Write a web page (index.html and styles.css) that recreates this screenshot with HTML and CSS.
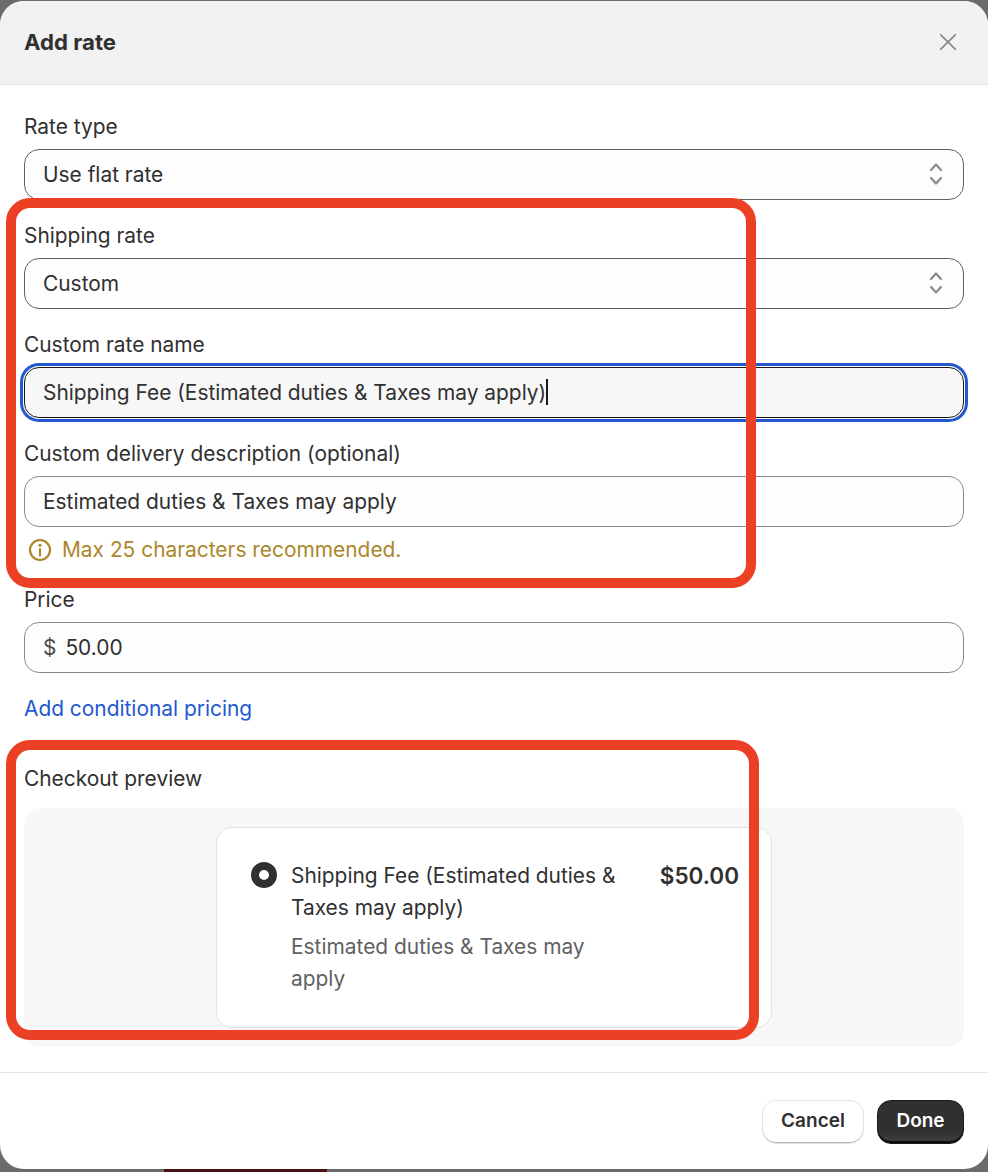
FILE: index.html
```html
<!DOCTYPE html>
<html lang="en">
<head>
<meta charset="utf-8">
<title>Add rate</title>
<link rel="stylesheet" href="styles.css">
</head>
<body>
<div class="modal">
  <header class="modal-head">
    <h1>Add rate</h1>
    <svg class="close" viewBox="0 0 20 20" aria-label="Close"><path d="M2 2 18 18M18 2 2 18"/></svg>
  </header>
  <main class="modal-body">
    <div class="field">
      <label>Rate type</label>
      <div class="control select"><span>Use flat rate</span>
        <svg class="updown" viewBox="0 0 14 26"><path d="M2 9 7 3.500 12 9M2 17 7 22.500 12 17"/></svg>
      </div>
    </div>
    <div class="field">
      <label>Shipping rate</label>
      <div class="control select"><span>Custom</span>
        <svg class="updown" viewBox="0 0 14 26"><path d="M2 9 7 3.500 12 9M2 17 7 22.500 12 17"/></svg>
      </div>
    </div>
    <div class="field">
      <label>Custom rate name</label>
      <div class="control focused"><span>Shipping Fee (Estimated duties &amp; Taxes may apply)</span><i class="caret"></i></div>
    </div>
    <div class="field">
      <label>Custom delivery description (optional)</label>
      <div class="control light"><span>Estimated duties &amp; Taxes may apply</span></div>
      <p class="warning">
        <svg viewBox="0 0 24 24"><circle cx="12" cy="12" r="10"/><path d="M12 11v6.500"/><circle class="dot" cx="12" cy="7.300" r="1.500"/></svg>
        Max 25 characters recommended.
      </p>
    </div>
    <div class="field">
      <label>Price</label>
      <div class="control light"><span class="prefix">$</span><span>50.00</span></div>
    </div>
    <a class="link" href="#">Add conditional pricing</a>
    <section class="preview-block">
      <label>Checkout preview</label>
      <div class="preview">
        <div class="card">
          <span class="radio"></span>
          <div class="rate-text">
            <div class="rate-name">Shipping Fee (Estimated duties &amp; Taxes may apply)</div>
            <div class="rate-desc">Estimated duties &amp; Taxes may apply</div>
          </div>
          <strong class="rate-price">$50.00</strong>
        </div>
      </div>
    </section>
  </main>
  <footer class="modal-foot">
    <button class="btn cancel">Cancel</button>
    <button class="btn done">Done</button>
  </footer>
  <div class="mark mark-a"></div>
  <div class="mark mark-b"></div>
</div>
<div class="peek"></div>
</body>
</html>
```

FILE: styles.css
```css
* { box-sizing: border-box; }
html, body { margin: 0; height: 1172px; overflow: hidden; }
body {
  background: #6b6b6b;
  font-family: Inter, "Liberation Sans", sans-serif;
  font-size: 20.900px;
  color: #303030;
  padding-top: 1px;
}
.modal {
  position: relative;
  height: 1168px;
  background: #fff;
  border-radius: 24px;
  overflow: hidden;
  display: flex;
  flex-direction: column;
}
.modal-head {
  height: 84px;
  flex: none;
  background: #f2f2f2;
  border-bottom: 1px solid #e3e3e3;
  display: flex;
  align-items: center;
  justify-content: space-between;
  padding: 0 31px 2px 24px;
}
.modal-head h1 { margin: 0; font-size: 22.200px; font-weight: 700; }
.close { width: 18px; height: 18px; fill: none; stroke: #8a8a8a; stroke-width: 2; stroke-linecap: round; }
.modal-body {
  flex: 1;
  padding: 29px 24px 0;
}
label { display: block; line-height: 26px; height: 26px; margin-bottom: 9px; }
.field { margin-bottom: 23.330px; }
.control {
  height: 50.670px;
  border: 1px solid #8a8a8a;
  border-radius: 15px;
  background: #fdfdfd;
  padding: 0 18px;
  display: flex;
  align-items: center;
  position: relative;
}
.select { border-color: #616161; justify-content: space-between; padding-right: 20px; }
.updown { width: 14px; height: 26px; fill: none; stroke: #8a8a8a; stroke-width: 2.200; stroke-linecap: round; stroke-linejoin: round; }
.focused {
  border-color: #1a1a1a;
  background: #f7f7f7;
  box-shadow: 0 0 0 1px #fff, 0 0 0 4px #2358cf;
}
.caret { display: block; width: 2px; height: 26px; background: #1a1a1a; margin-left: 0; }
.warning {
  margin: 10px 0 0;
  padding: 0 0 1.500px 4px;
  line-height: 26px;
  color: #ab872c;
  display: flex;
  align-items: center;
  gap: 10px;
}
.warning svg { width: 24px; height: 24px; fill: none; stroke: #ab872c; stroke-width: 2.200; stroke-linecap: round; }
.warning .dot { fill: #ab872c; stroke: none; }
.prefix { margin-right: 9px; color: #4a4a4a; }
.link { display: block; color: #2358cf; text-decoration: none; line-height: 26px; }
.preview-block { margin-top: 44px; }
.preview-block label { margin-bottom: 16px; }
.preview {
  height: 239px;
  background: #f7f7f7;
  border-radius: 16px;
  padding-top: 19px;
  display: flex;
  justify-content: center;
}
.card {
  width: 556px;
  height: 201px;
  background: #fff;
  border: 1px solid #e3e3e3;
  border-radius: 16px;
  padding: 32px 32px 0 34px;
  display: flex;
  align-items: flex-start;
}
.radio {
  flex: none;
  width: 26px;
  height: 26px;
  margin-top: 2px;
  border-radius: 50%;
  border: 8px solid #303030;
  background: #fff;
}
.rate-text { width: 340px; margin-left: 14px; }
.rate-name { line-height: 32px; }
.rate-desc { line-height: 32px; margin-top: 7px; color: #616161; width: 310px; }
.rate-price { margin-left: auto; font-weight: 600; font-size: 22.500px; line-height: 32px; }
.modal-foot {
  flex: none;
  height: 97px;
  border-top: 1px solid #e3e3e3;
  display: flex;
  justify-content: flex-end;
  gap: 13px;
  padding: 27px 24px 0;
}
.btn {
  height: 44px;
  border-radius: 14px;
  padding: 0 0 3px;
  font: 600 19px Inter, "Liberation Sans", sans-serif;
}
.cancel {
  width: 102px;
  background: #fff;
  color: #303030;
  border: 1px solid #e3e3e3;
  box-shadow: inset 0 -1px 0 #b5b5b5;
}
.done {
  width: 87px;
  background: linear-gradient(#303030 70%, #404040);
  color: #fff;
  border: 1px solid #1a1a1a;
  box-shadow: inset 0 -2px 0 #0c0c0c;
}
.mark {
  position: absolute;
  border: 10px solid #ec4025;
  border-radius: 24px;
  pointer-events: none;
}
.mark-a { left: 6px; top: 197px; width: 750px; height: 390px; }
.mark-b { left: 6px; top: 739px; width: 753px; height: 300px; }
.peek { width: 163px; height: 3px; margin-left: 164px; background: #4a1014; }
```
